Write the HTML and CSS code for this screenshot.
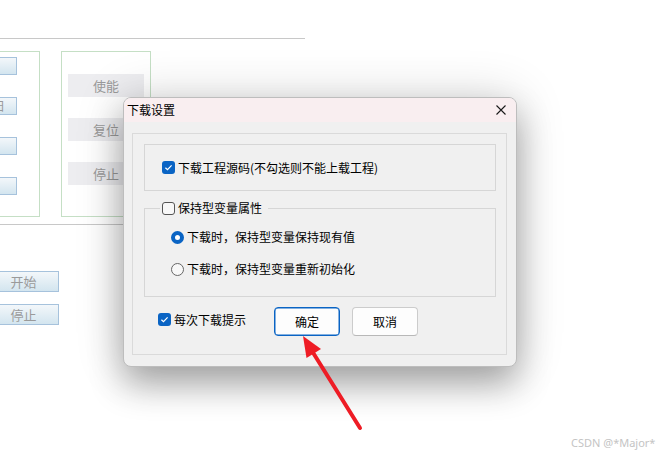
FILE: index.html
```html
<!DOCTYPE html>
<html lang="zh-CN">
<head>
<meta charset="utf-8">
<title>下载设置</title>
<link rel="stylesheet" href="styles.css">
</head>
<body>
<div class="bg">
  <div class="rule rule-top"></div>
  <div class="panels">
    <div class="panel panel-a">
      <div class="blue-btn"></div>
      <div class="blue-btn">日</div>
      <div class="blue-btn"></div>
      <div class="blue-btn"></div>
    </div>
    <div class="panel panel-b">
      <div class="gray-btn">使能</div>
      <div class="gray-btn">复位</div>
      <div class="gray-btn">停止</div>
    </div>
  </div>
  <div class="rule rule-mid"></div>
  <div class="run-btns">
    <div class="run-btn">开始</div>
    <div class="run-btn">停止</div>
  </div>
</div>

<div class="dialog">
  <div class="titlebar">
    <span class="title">下载设置</span>
    <svg class="close" width="10" height="10" viewBox="0 0 10 10"><path d="M0.5 0.5 L9.5 9.5 M9.5 0.5 L0.5 9.5" stroke="#1a1a1a" stroke-width="1.1" fill="none"/></svg>
  </div>
  <div class="body">
    <div class="frame">
      <div class="group1">
        <label class="opt">
          <span class="cb on"><svg width="13" height="13" viewBox="0 0 13 13"><polyline points="3.4,6.7 5.5,8.7 9.6,4.4" fill="none" stroke="#fff" stroke-width="1.2"/></svg></span>
          <span>下载工程源码(不勾选则不能上载工程)</span>
        </label>
      </div>
      <fieldset class="group2">
        <legend class="opt">
          <span class="cb off"></span>
          <span>保持型变量属性</span>
        </legend>
        <div class="opt radio-row first">
          <span class="rb on"></span>
          <span>下载时，保持型变量保持现有值</span>
        </div>
        <div class="opt radio-row">
          <span class="rb off"></span>
          <span>下载时，保持型变量重新初始化</span>
        </div>
      </fieldset>
      <div class="bottom">
        <label class="opt prompt">
          <span class="cb on"><svg width="13" height="13" viewBox="0 0 13 13"><polyline points="3.4,6.7 5.5,8.7 9.6,4.4" fill="none" stroke="#fff" stroke-width="1.2"/></svg></span>
          <span>每次下载提示</span>
        </label>
        <button class="btn primary">确定</button>
        <button class="btn">取消</button>
      </div>
    </div>
  </div>
</div>

<svg class="arrow" width="670" height="459" viewBox="0 0 670 459">
  <line x1="360" y1="428" x2="312" y2="351" stroke="#ee1c25" stroke-width="4" stroke-linecap="round"/>
  <polygon points="303,336 306.5,358 321,349" fill="#ee1c25"/>
</svg>

<div class="watermark">CSDN @*Major*</div>
</body>
</html>
```

FILE: styles.css
```css
html, body {
  margin: 0;
  padding: 0;
  background: #ffffff;
  width: 670px;
  height: 459px;
  overflow: hidden;
  font-family: "Noto Sans CJK SC", "Noto Sans", sans-serif;
  font-size: 12px;
  color: #000;
}

.bg {
  position: relative;
}

.rule {
  width: 305px;
}
.rule-top {
  height: 38px;
  border-bottom: 1px solid #c8c8c8;
}
.rule-mid {
  margin-top: 7px;
  border-top: 1px solid #c8c8c8;
}

.panels {
  display: flex;
  margin-top: 12px;
}
.panel {
  box-sizing: border-box;
  height: 166px;
  border: 1px solid #c5dfc5;
  display: flex;
  flex-direction: column;
}
.panel-a {
  margin-left: -60px;
  width: 100px;
  align-items: flex-end;
  padding: 5px 22px 0 0;
  gap: 22px;
}
.blue-btn {
  box-sizing: border-box;
  width: 70px;
  height: 18px;
  border: 1px solid #a6c2dc;
  background: linear-gradient(#f3f7fa, #d3e5ef);
  color: #9a9a9a;
  text-align: right;
  padding-right: 11px;
  line-height: 16px;
  overflow: hidden;
}
.panel-b {
  margin-left: 21px;
  width: 90px;
  padding: 22px 0 0 6px;
  gap: 21px;
}
.gray-btn {
  width: 76px;
  height: 23px;
  background: #ededf0;
  color: #9a9a9a;
  text-align: center;
  line-height: 23px;
  font-size: 13px;
}

.run-btns {
  display: flex;
  flex-direction: column;
  gap: 12px;
  margin-top: 46px;
  margin-left: -12px;
}
.run-btn {
  box-sizing: border-box;
  width: 71px;
  height: 21px;
  border: 1px solid #a6c2dc;
  background: linear-gradient(#f3f7fa, #d3e5ef);
  color: #9a9a9a;
  text-align: center;
  line-height: 19px;
  font-size: 13px;
}

/* dialog */
.dialog {
  position: absolute;
  left: 123px;
  top: 97px;
  width: 394px;
  height: 270px;
  box-sizing: border-box;
  border: 1px solid #bdbdbd;
  border-radius: 8px;
  background: #f0f0f0;
  overflow: hidden;
  display: flex;
  flex-direction: column;
  box-shadow: 0 18px 34px rgba(0, 0, 0, 0.3), 0 0 50px rgba(0, 0, 0, 0.16);
}
.titlebar {
  height: 24px;
  background: #f9eef0;
  display: flex;
  align-items: center;
  justify-content: space-between;
  padding: 0 10px 0 3px;
  flex: none;
}
.title {
  font-size: 12px;
  line-height: 16px;
}
.close {
  display: block;
}
.body {
  flex: 1;
  display: flex;
  padding: 11px 9px 11px 8px;
}
.frame {
  flex: 1;
  border: 1px solid #dadada;
  padding: 10px 10px 0 11px;
  display: flex;
  flex-direction: column;
}

.opt {
  display: flex;
  align-items: center;
  gap: 3px;
  white-space: nowrap;
  line-height: 16px;
  font-size: 12px;
}

.cb {
  box-sizing: border-box;
  width: 13px;
  height: 13px;
  border-radius: 3px;
  flex: none;
  display: block;
}
.cb svg {
  display: block;
}
.cb.on {
  background: #0a64c4;
}
.cb.off {
  border: 1px solid #555;
  background: #f8f8f8;
}
.rb {
  box-sizing: border-box;
  width: 13px;
  height: 13px;
  border-radius: 50%;
  flex: none;
}
.rb.on {
  border: 4px solid #0a64c4;
  background: #fff;
}
.rb.off {
  border: 1px solid #666;
  background: #f8f8f8;
}

.group1 {
  box-sizing: border-box;
  height: 47px;
  border: 1px solid #d6d6d6;
  display: flex;
  align-items: center;
  padding-left: 17px;
}

.group2 {
  margin: 9px 0 0 0;
  border: 1px solid #d6d6d6;
  padding: 0 0 17px 26px;
  min-inline-size: 0;
}
.group2 legend {
  margin-left: -11px;
  padding: 0 6px 0 2px;
}
.radio-row {
  height: 20px;
  margin-top: 12px;
}
.radio-row.first {
  margin-top: 11px;
}

.bottom {
  display: flex;
  align-items: center;
  height: 29px;
  margin-top: 10px;
  padding-left: 14px;
}
.prompt {
  width: 116px;
  margin-bottom: 4px;
}
.btn {
  box-sizing: border-box;
  width: 66px;
  height: 29px;
  border: 1px solid #cccccc;
  border-bottom-color: #b8b8b8;
  border-radius: 4px;
  background: #fdfdfd;
  font-family: inherit;
  font-size: 12px;
  color: #000;
  padding: 0;
  margin-right: 12px;
}
.btn.primary {
  border: 1px solid #0a64c4;
  box-shadow: inset 0 0 0 0.5px #0a64c4;
}

.arrow {
  position: absolute;
  left: 0;
  top: 0;
  pointer-events: none;
}

.watermark {
  position: absolute;
  left: 571px;
  top: 435px;
  font-family: "Noto Sans", sans-serif;
  font-size: 11px;
  color: #c4c4c4;
  line-height: 16px;
}
```
